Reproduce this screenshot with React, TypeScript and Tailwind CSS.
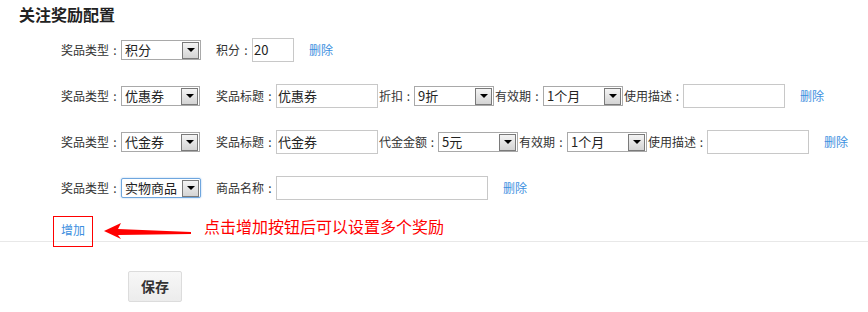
import React from "react";

const font = { fontFamily: '"Noto Sans CJK SC", "Noto Sans", sans-serif' };

function Select({ value, w = 80, focused = false }: { value: string; w?: number; focused?: boolean }) {
  return (
    <div
      className={
        "flex h-[20px] items-center bg-white " +
        (focused ? "border border-[#6fa6de] rounded-[2px] shadow-[0_0_2px_#9cc6ef]" : "border border-[#a9a9a9]")
      }
      style={{ width: w }}
    >
      <span className="flex-1 pl-[3px] text-[13px] leading-[18px] text-[#222] whitespace-nowrap overflow-hidden">{value}</span>
      <div className="mr-[1px] flex h-[17px] w-[17px] items-center justify-center border border-[#7a7a7a] bg-gradient-to-b from-[#f4f4f4] to-[#d4d4d4]">
        <div className="h-0 w-0 border-x-[4px] border-t-[4px] border-x-transparent border-t-black" />
      </div>
    </div>
  );
}

function Input({ value = "", w }: { value?: string; w: number }) {
  return (
    <div
      className="flex h-[24px] items-center border border-[#c8c8c8] bg-white pl-[1px] text-[13px] leading-[18px] text-[#222]"
      style={{ width: w }}
    >
      {value}
    </div>
  );
}

function Label({ text, w }: { text: string; w: number }) {
  return (
    <span className="flex text-[12px] leading-[16px] text-[#333] whitespace-nowrap" style={{ width: w }}>
      {text}
      <span className="inline-block w-[12px] text-center">:</span>
    </span>
  );
}

function Del({ ml }: { ml: number }) {
  return (
    <span className="text-[12px] leading-[16px] text-[#3d8fe0]" style={{ marginLeft: ml }}>
      删除
    </span>
  );
}

export default function App() {
  return (
    <div className="relative h-[312px] w-[868px] bg-white" style={font}>
      <div className="h-[27px] pl-[19px] pt-[4px] text-[16px] font-bold leading-[20px] text-[#222]">关注奖励配置</div>

      <div className="pl-[61px]">
        <div className="flex h-[46px] items-center">
          <Label text="奖品类型" w={60} />
          <Select value="积分" w={80} />
          <span className="ml-[15px]" />
          <Label text="积分" w={36} />
          <Input value="20" w={42} />
          <Del ml={15} />
        </div>

        <div className="flex h-[46px] items-center">
          <Label text="奖品类型" w={60} />
          <Select value="优惠券" w={79} />
          <span className="ml-[16px]" />
          <Label text="奖品标题" w={60} />
          <Input value="优惠券" w={102} />
          <span className="ml-[1px]" />
          <Label text="折扣" w={35} />
          <Select value="9折" w={80} />
          <span className="ml-[1px]" />
          <Label text="有效期" w={48} />
          <Select value="1个月" w={80} />
          <span className="ml-[1px]" />
          <Label text="使用描述" w={59} />
          <Input w={102} />
          <Del ml={15} />
        </div>

        <div className="flex h-[46px] items-center">
          <Label text="奖品类型" w={60} />
          <Select value="代金券" w={79} />
          <span className="ml-[16px]" />
          <Label text="奖品标题" w={60} />
          <Input value="代金券" w={102} />
          <span className="ml-[1px]" />
          <Label text="代金金额" w={59} />
          <Select value="5元" w={80} />
          <span className="ml-[1px]" />
          <Label text="有效期" w={48} />
          <Select value="1个月" w={80} />
          <span className="ml-[1px]" />
          <Label text="使用描述" w={59} />
          <Input w={102} />
          <Del ml={15} />
        </div>

        <div className="flex h-[46px] items-center">
          <Label text="奖品类型" w={60} />
          <Select value="实物商品" w={80} focused />
          <span className="ml-[15px]" />
          <Label text="商品名称" w={60} />
          <Input w={212} />
          <Del ml={15} />
        </div>
      </div>

      <div className="relative flex h-[31px] items-end border-b border-[#e8e8e8] pb-[3px]">
        <span className="ml-[61px] text-[12px] leading-[16px] text-[#3d8fe0]">增加</span>
        <div className="absolute left-[53px] top-[5px] h-[31px] w-[40px] border border-[#ff0000]" />
        <svg className="ml-[19px] mb-[-2px]" width="88" height="18" viewBox="0 0 88 18">
          <polygon points="0,9 17,1 14,7 87,10 87,12 14,13 17,17" fill="#ff0000" />
        </svg>
        <span className="ml-[12px] mb-[2px] text-[16px] leading-[20px] text-[#ff0000]">点击增加按钮后可以设置多个奖励</span>
      </div>

      <div className="pl-[128px] pt-[29px]">
        <button className="h-[31px] w-[54px] rounded-[2px] border border-[#dcdcdc] bg-gradient-to-b from-[#f7f7f7] to-[#ececec] text-[14px] font-bold text-[#333]">
          保存
        </button>
      </div>
    </div>
  );
}
